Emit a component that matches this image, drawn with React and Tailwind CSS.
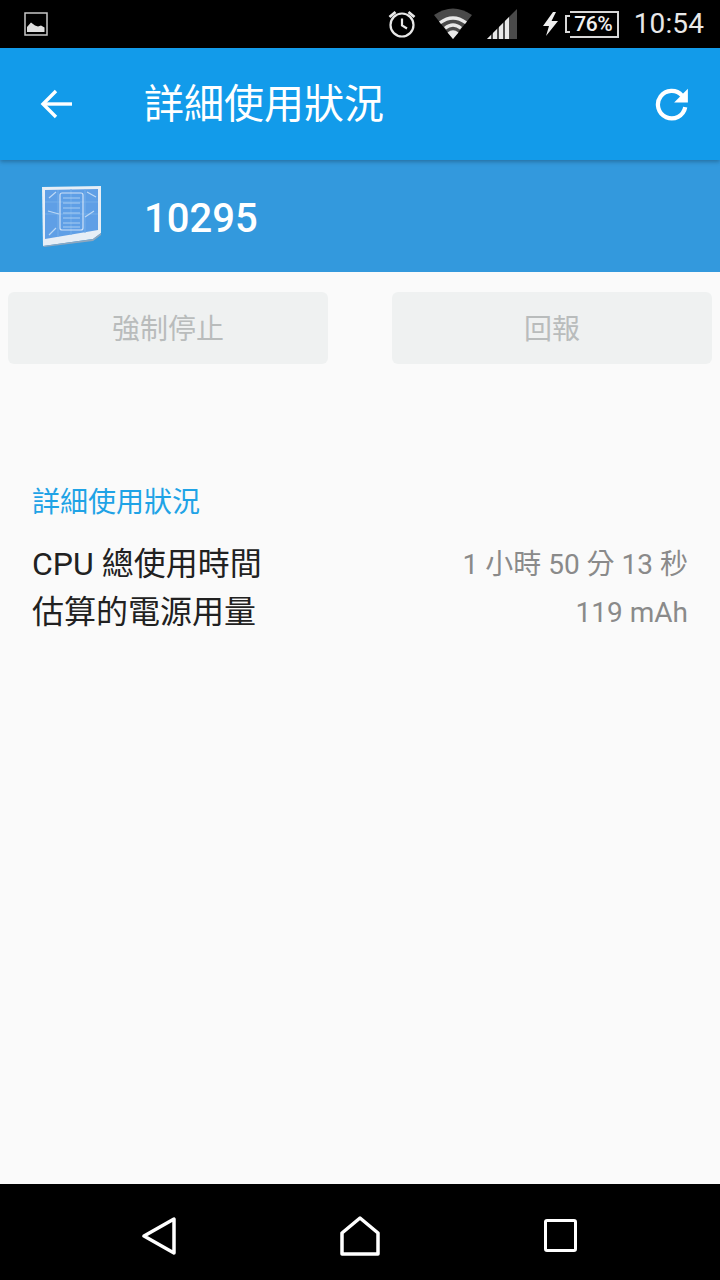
const sans = "font-['Roboto','Noto_Sans_CJK_TC',sans-serif]";

function ImageIcon() {
  return (
    <svg width="24" height="24" viewBox="0 0 24 24">
      <rect x="1" y="1" width="22" height="22" fill="none" stroke="#c8c8c8" strokeWidth="1.5" />
      <path d="M3 20 V15 L7 10.500 L11 13.500 L14 14.500 L17 13.500 L20.500 15.500 V20 Z" fill="#e0e0e0" />
    </svg>
  );
}

function Alarm() {
  return (
    <svg width="30" height="30" viewBox="0 0 30 30" fill="none" stroke="#e8e8e8" strokeWidth="2.200">
      <circle cx="15" cy="16" r="11.500" />
      <path d="M15 9.500 V16.500 L20 19.500" />
      <path d="M2.500 8 L8.500 3 M27.500 8 L21.500 3" strokeWidth="2.800" />
    </svg>
  );
}

function Wifi() {
  return (
    <svg width="40" height="32" viewBox="0 0 38 32">
      <path d="M0 7 Q19 -6 38 7 L19 31 Z" fill="#4a4a4a" />
      <path d="M5 13.500 Q19 3 33 13.500 L31 16 Q19 7.500 7 16 Z" fill="#e8e8e8" />
      <path d="M10 19 Q19 11.500 28 19 L26 21.500 Q19 16 12 21.500 Z" fill="#e8e8e8" />
      <path d="M19 31 L13.500 24.500 Q19 20 24.500 24.500 Z" fill="#e8e8e8" />
    </svg>
  );
}

function Signal() {
  return (
    <svg width="30" height="30" viewBox="0 0 30 30">
      <path d="M0 30 L30 0 V30 Z" fill="#4a4a4a" />
      <path d="M0 30 L4 26 V30 Z M6 30 V24 L10 20 V30 Z M12 30 V18 L16 14 V30 Z M18 30 V12 L22 8 V30 Z" fill="#e8e8e8" />
    </svg>
  );
}

function Bolt() {
  return (
    <svg width="16" height="24" viewBox="0 0 16 24">
      <path d="M10 0 L0 14 H6 L3 24 L15 9 H8.500 L13 0 Z" fill="#f0f0f0" />
    </svg>
  );
}

function StatusBar() {
  return (
    <div className="h-12 bg-black flex items-center justify-between pl-6 pr-4 shrink-0">
      <ImageIcon />
      <div className="flex items-center">
        <Alarm />
        <div className="ml-[16px]"><Wifi /></div>
        <div className="ml-[14px]"><Signal /></div>
        <div className="ml-[26px]"><Bolt /></div>
        <div className="ml-[6px] flex items-center">
          <div className="w-[5px] h-[18px] border-2 border-r-0 border-[#d8d8d8]" />
          <div className={`w-[49px] h-[27px] border-2 border-l-0 border-[#d8d8d8] flex items-center justify-center text-[21px] font-medium leading-none text-[#f0f0f0] tracking-[-0.5px] ${sans}`}>76%</div>
        </div>
        <div className={`ml-[15px] text-[28px] leading-none text-[#e8e8e8] tracking-[0.1px] ${sans}`}>10:54</div>
      </div>
    </div>
  );
}

function Back() {
  return (
    <svg width="36" height="36" viewBox="0 0 36 36" fill="none" stroke="#fff" strokeWidth="3.400">
      <path d="M33 18 H5" />
      <path d="M17 5 L4 18 L17 31" />
    </svg>
  );
}

function Refresh() {
  return (
    <svg width="36" height="36" viewBox="0 0 34 34" fill="none">
      <path d="M26.500 9 A13 13 0 1 0 29.500 20" stroke="#fff" strokeWidth="4" />
      <path d="M32 2.500 V15.500 H19 Z" fill="#fff" />
    </svg>
  );
}

function AppIcon() {
  return (
    <svg width="62" height="62" viewBox="0 0 62 62" className="block">
      <path d="M1 2 L60 1 V48 L52 54 L2 61 Z" fill="#e6eef6" />
      <path d="M4 5 L57 4 V45 L4 54 Z" fill="#5f9fe6" />
      <path d="M4 29 H57 M30 4 V50 M4 17 H57 M17 5 V52 M44 4 V48" stroke="#74aeea" strokeWidth="1" />
      <rect x="19" y="8" width="23" height="37" rx="2" fill="none" stroke="#cfe2f7" strokeWidth="1.200" />
      <path d="M22 13 H39 M22 18 H39 M22 23 H39 M22 28 H39 M22 33 H39 M22 38 H39 M22 42 H39" stroke="#a9cdf2" strokeWidth="1" />
      <path d="M8 13 L15 7 M46 7 L55 12 M7 26 L18 29 M44 32 L53 26 M8 50 L15 43" stroke="#bcd8f5" strokeWidth="1.200" />
      <path d="M2 61 L52 54 L60 48 L60 50 L52 56 L3 62 Z" fill="#8ea7bf" />
    </svg>
  );
}

function NavBack() {
  return (
    <svg width="36" height="40" viewBox="0 0 36 40" fill="none" stroke="#fff" strokeWidth="3.500" strokeLinejoin="round">
      <path d="M32 3 V37 L2 20 Z" />
    </svg>
  );
}

function NavHome() {
  return (
    <svg width="40" height="40" viewBox="0 0 40 40" fill="none" stroke="#fff" strokeWidth="3.500" strokeLinejoin="round">
      <path d="M20 2 L38 17 V38 H2 V17 Z" />
    </svg>
  );
}

function NavRecent() {
  return (
    <div className="w-[33px] h-[33px] border-[3.5px] border-white rounded-[3px]" />
  );
}

function ActionButton({ label }) {
  return (
    <div className="w-[320px] h-[72px] rounded-[6px] bg-[#eff1f1] flex items-center justify-center text-[28px] leading-none pt-[3px] text-[#b9bcbc]">
      {label}
    </div>
  );
}

function Row({ label, value }) {
  return (
    <div className="h-12 flex items-center justify-between">
      <span className="text-[32px] leading-none text-[#212121]">{label}</span>
      <span className="text-[28px] leading-none text-[#8a8a8a] pt-[1px]">{value}</span>
    </div>
  );
}

export default function App() {
  return (
    <div className={`w-[720px] h-[1280px] flex flex-col bg-[#fafafa] overflow-hidden ${sans}`}>
      <StatusBar />
      <header className="relative z-10 h-28 bg-[#129bea] shadow-[0_2px_4px_rgba(0,0,0,0.25)] flex items-center pl-[39px] pr-[30px] shrink-0">
        <Back />
        <h1 className="ml-[69px] text-[40px] leading-none text-white font-normal flex-1 pt-[2px]">詳細使用狀況</h1>
        <Refresh />
      </header>
      <div className="h-28 bg-[#3399dd] flex items-center pl-[41px] shrink-0">
        <AppIcon />
        <span className="ml-[41px] text-[40px] leading-none text-white font-medium pt-[5px]">10295</span>
      </div>
      <div className="flex justify-between px-2 pt-5">
        <ActionButton label="強制停止" />
        <ActionButton label="回報" />
      </div>
      <section className="px-8 pt-[125px]">
        <div className="text-[28px] leading-none text-[#1fa3e6] mb-[23px] h-7">詳細使用狀況</div>
        <div>
          <Row label="CPU 總使用時間" value="1 小時 50 分 13 秒" />
          <Row label="估算的電源用量" value="119 mAh" />
        </div>
      </section>
      <div className="flex-1" />
      <nav className="h-24 bg-black pt-[7px] grid grid-cols-3 place-items-center px-[60px] shrink-0">
        <NavBack />
        <NavHome />
        <NavRecent />
      </nav>
    </div>
  );
}
